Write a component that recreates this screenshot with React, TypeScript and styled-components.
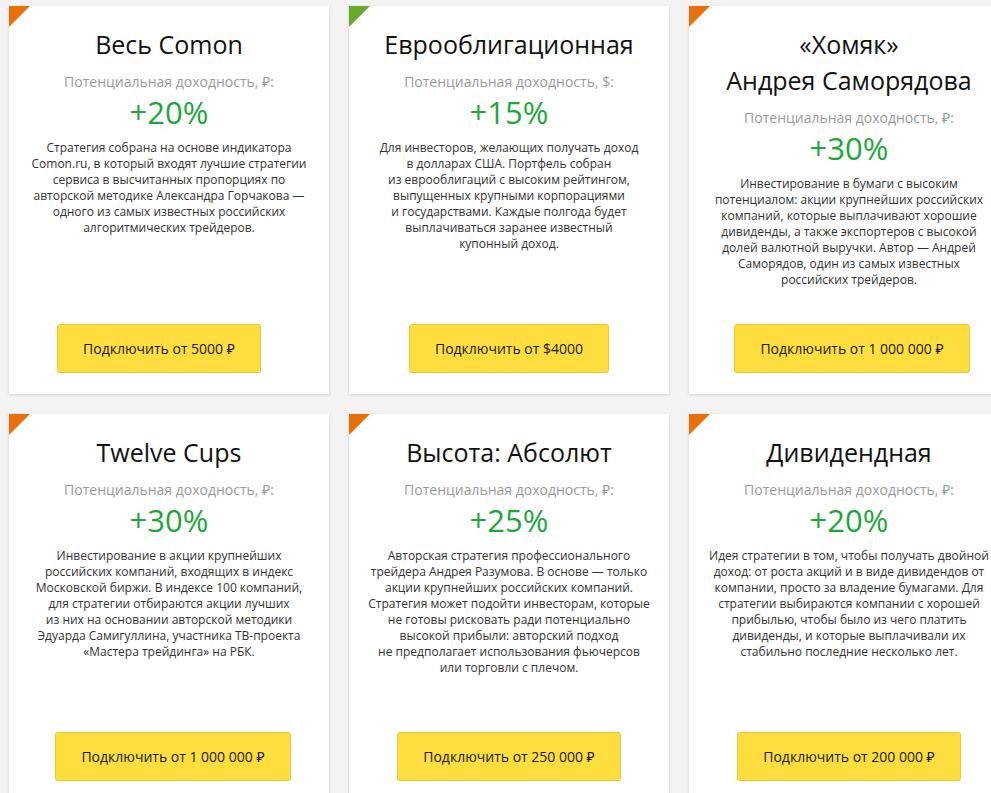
import React from "react";
import styled, { createGlobalStyle } from "styled-components";

const GlobalStyle = createGlobalStyle`
  html, body {
    margin: 0;
    padding: 0;
    overflow: hidden;
    background: #f3f3f3;
    font-family: "Open Sans", "Noto Sans", Arial, sans-serif;
  }
`;

const Grid = styled.div`
  display: grid;
  grid-template-columns: repeat(3, 320px);
  grid-auto-rows: 388px;
  gap: 20px;
  padding: 6px 0 0 9px;
  width: max-content;
`;

const Card = styled.div`
  position: relative;
  box-sizing: border-box;
  background: #fff;
  box-shadow: 0 1px 3px rgba(0, 0, 0, 0.14);
  display: flex;
  flex-direction: column;
  align-items: center;
  padding: 20px 20px 21px;
  text-align: center;
`;

const Corner = styled.div<{ $color: string }>`
  position: absolute;
  top: 0;
  left: 0;
  width: 0;
  height: 0;
  border-top: 21px solid ${(p) => p.$color};
  border-right: 21px solid transparent;
`;

const Title = styled.h2`
  margin: 0;
  font-size: 25px;
  line-height: 36px;
  font-weight: 400;
  color: #111;
`;

const Subtitle = styled.div`
  margin-top: 10px;
  font-size: 14px;
  line-height: 20px;
  color: #9a9a9a;
`;

const Percent = styled.div`
  margin-top: 2px;
  font-size: 31px;
  line-height: 36px;
  color: #1ea73b;
`;

const Description = styled.p`
  margin: 10px 0 0;
  font-size: 12px;
  line-height: 16px;
  color: #333;
  white-space: nowrap;
`;

const Button = styled.button<{ $shift: number }>`
  margin-top: auto;
  margin-left: ${(p) => (p.$shift > 0 ? p.$shift * 2 : 0)}px;
  margin-right: ${(p) => (p.$shift < 0 ? -p.$shift * 2 : 0)}px;
  box-sizing: border-box;
  height: 49px;
  padding: 0 25px;
  background: #fedd3e;
  border: 1px solid #ecc62e;
  border-radius: 3px;
  font-family: inherit;
  font-size: 14px;
  color: #1a1a1a;
  cursor: pointer;
`;

type Strategy = {
  title: string[];
  currency: string;
  percent: string;
  lines: string[];
  price: string;
  corner: string;
  shift: number;
};

const ORANGE = "#e8700b";
const GREEN = "#69a92b";

const strategies: Strategy[] = [
  {
    title: ["Весь Comon"],
    currency: "₽",
    percent: "+20%",
    lines: [
      "Стратегия собрана на основе индикатора",
      "Comon.ru, в который входят лучшие стратегии",
      "сервиса в высчитанных пропорциях по",
      "авторской методике Александра Горчакова —",
      "одного из самых известных российских",
      "алгоритмических трейдеров.",
    ],
    price: "5000 ₽",
    corner: ORANGE,
    shift: -10,
  },
  {
    title: ["Еврооблигационная"],
    currency: "$",
    percent: "+15%",
    lines: [
      "Для инвесторов, желающих получать доход",
      "в долларах США. Портфель собран",
      "из еврооблигаций с высоким рейтингом,",
      "выпущенных крупными корпорациями",
      "и государствами. Каждые полгода будет",
      "выплачиваться заранее известный",
      "купонный доход.",
    ],
    price: "$4000",
    corner: GREEN,
    shift: 0,
  },
  {
    title: ["«Хомяк»", "Андрея Саморядова"],
    currency: "₽",
    percent: "+30%",
    lines: [
      "Инвестирование в бумаги с высоким",
      "потенциалом: акции крупнейших российских",
      "компаний, которые выплачивают хорошие",
      "дивиденды, а также экспортеров с высокой",
      "долей валютной выручки. Автор — Андрей",
      "Саморядов, один из самых известных",
      "российских трейдеров.",
    ],
    price: "1 000 000 ₽",
    corner: ORANGE,
    shift: 3,
  },
  {
    title: ["Twelve Cups"],
    currency: "₽",
    percent: "+30%",
    lines: [
      "Инвестирование в акции крупнейших",
      "российских компаний, входящих в индекс",
      "Московской биржи. В индексе 100 компаний,",
      "для стратегии отбираются акции лучших",
      "из них на основании авторской методики",
      "Эдуарда Самигуллина, участника ТВ-проекта",
      "«Мастера трейдинга» на РБК.",
    ],
    price: "1 000 000 ₽",
    corner: ORANGE,
    shift: 4,
  },
  {
    title: ["Высота: Абсолют"],
    currency: "₽",
    percent: "+25%",
    lines: [
      "Авторская стратегия профессионального",
      "трейдера Андрея Разумова. В основе — только",
      "акции крупнейших российских компаний.",
      "Стратегия может подойти инвесторам, которые",
      "не готовы рисковать ради потенциально",
      "высокой прибыли: авторский подход",
      "не предполагает использования фьючерсов",
      "или торговли с плечом.",
    ],
    price: "250 000 ₽",
    corner: ORANGE,
    shift: 0,
  },
  {
    title: ["Дивидендная"],
    currency: "₽",
    percent: "+20%",
    lines: [
      "Идея стратегии в том, чтобы получать двойной",
      "доход: от роста акций и в виде дивидендов от",
      "компании, просто за владение бумагами. Для",
      "стратегии выбираются компании с хорошей",
      "прибылью, чтобы было из чего платить",
      "дивиденды, и которые выплачивали их",
      "стабильно последние несколько лет.",
    ],
    price: "200 000 ₽",
    corner: ORANGE,
    shift: 0,
  },
];

const withBreaks = (parts: string[]) =>
  parts.map((p, i) => (
    <React.Fragment key={i}>
      {i > 0 && <br />}
      {p}
    </React.Fragment>
  ));

export default function App() {
  return (
    <>
      <GlobalStyle />
      <Grid>
        {strategies.map((s, i) => (
          <Card key={i}>
            <Corner $color={s.corner} />
            <Title>{withBreaks(s.title)}</Title>
            <Subtitle>Потенциальная доходность, {s.currency}:</Subtitle>
            <Percent>{s.percent}</Percent>
            <Description>{withBreaks(s.lines)}</Description>
            <Button $shift={s.shift}>Подключить от {s.price}</Button>
          </Card>
        ))}
      </Grid>
    </>
  );
}
